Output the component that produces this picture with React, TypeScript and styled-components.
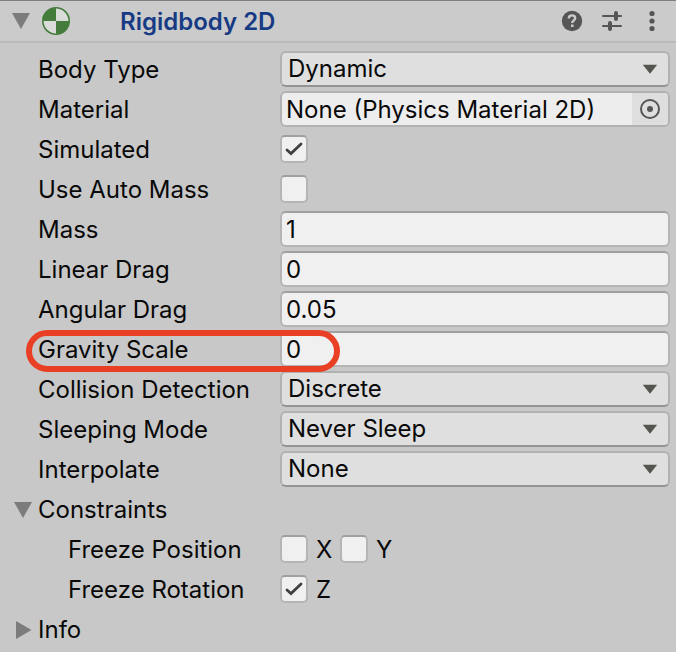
import React, { useId, useState } from "react";
import styled, { createGlobalStyle } from "styled-components";

const GlobalStyle = createGlobalStyle`
  *, *::before, *::after { box-sizing: border-box; }
  body {
    margin: 0;
    background: #c8c8c8;
    color: #090909;
    font-family: Inter, "Liberation Sans", sans-serif;
    font-size: 24px;
    line-height: 30px;
  }
  button, input, select { font: inherit; color: inherit; margin: 0; }
`;

const Inspector = styled.main`
  display: flex;
  flex-direction: column;
  min-height: 100vh;
  background: #c8c8c8;
`;

const Header = styled.header`
  display: flex;
  align-items: center;
  height: 43px;
  padding: 0 12px;
  background: #cbcbcb;
  border-top: 1px solid #7f7f7f;
  border-bottom: 2px solid #bababa;
`;

const IconButton = styled.button`
  display: flex;
  align-items: center;
  justify-content: center;
  padding: 0;
  border: 0;
  background: transparent;
  cursor: pointer;
  svg { display: block; }
`;

const HeaderActions = styled.div`
  display: flex;
  align-items: center;
  gap: 16px;
  margin-left: auto;
`;

const ComponentIcon = styled.svg`
  display: block;
  flex: none;
  margin-left: 12px;
`;

const Title = styled.h1`
  margin: 0 0 0 50px;
  padding-top: 2px;
  color: #173a84;
  font-size: 24px;
  font-weight: 600;
  line-height: 30px;
`;

const Properties = styled.div`
  display: flex;
  flex-direction: column;
  padding: 7px 6px 0 0;
`;

const Row = styled.div`
  position: relative;
  display: grid;
  grid-template-columns: 280px minmax(0, 1fr);
  align-items: center;
  height: 40px;
`;

const Label = styled.label<{ $nested?: boolean }>`
  padding-left: ${(p) => (p.$nested ? 68 : 38)}px;
  white-space: nowrap;
`;

const GroupLabel = styled(Label).attrs({ as: "span" })``;

const Control = styled.div`
  position: relative;
  display: flex;
  align-items: center;
  height: 38px;
  align-self: start;
`;

const TextInput = styled.input`
  width: 100%;
  height: 36px;
  padding: 1px 4px 0;
  background: #f0f0f0;
  border: 2px solid #b5b5b5;
  border-top-color: #a0a0a0;
  border-radius: 6px;
  outline-color: #3a72b0;
`;

const Dropdown = styled.select`
  width: 100%;
  height: 36px;
  padding: 0 40px 0 6px;
  appearance: none;
  background: #dfdfdf;
  border: 2px solid #b2b2b2;
  border-bottom-color: #939393;
  border-radius: 6px;
  outline-color: #3a72b0;
`;

const DropdownArrow = styled.svg`
  position: absolute;
  right: 12px;
  top: 14px;
  pointer-events: none;
`;

const ObjectField = styled.div`
  display: flex;
  width: 100%;
  height: 36px;
  overflow: hidden;
  background: #ededed;
  border: 2px solid #b2b2b2;
  border-radius: 6px;
`;

const ObjectInput = styled.input`
  flex: 1;
  min-width: 0;
  padding: 1px 4px 0;
  border: 0;
  background: transparent;
  outline: 0;
`;

const PickerButton = styled(IconButton)`
  width: 36px;
  background: #dedede;
`;

const CheckGroup = styled.div`
  display: grid;
  grid-auto-flow: column;
  grid-auto-columns: 60px;
`;

const CheckLabel = styled.label`
  display: flex;
  align-items: center;
  gap: 8px;
`;

const AxisName = styled.span`
  padding-top: 2px;
`;

const CheckFrame = styled.span`
  position: relative;
  display: block;
  flex: none;
  width: 28px;
  height: 28px;
`;

const CheckInput = styled.input`
  display: block;
  width: 28px;
  height: 28px;
  appearance: none;
  background: #f0f0f0;
  border: 2px solid #b5b5b5;
  border-top-color: #a0a0a0;
  border-radius: 5px;
  outline-color: #3a72b0;
`;

const CheckMark = styled.svg`
  position: absolute;
  inset: 0;
  pointer-events: none;
`;

const FoldoutButton = styled.button`
  display: flex;
  align-items: center;
  gap: 6px;
  height: 40px;
  padding: 0 0 0 14px;
  border: 0;
  background: transparent;
  text-align: left;
  cursor: pointer;
`;

const Highlight = styled.div`
  position: absolute;
  left: 26px;
  top: 0;
  width: 314px;
  height: 42px;
  border: 6px solid #e94025;
  border-radius: 21px;
  z-index: 1;
  pointer-events: none;
`;

function Triangle({ open }: { open: boolean }) {
  return (
    <svg width="18" height="18" viewBox="0 0 18 18" fill="#7c7c7c" aria-hidden="true">
      <path d={open ? "M0 1H18L9 17Z" : "M2 0L17.500 9L2 18Z"} />
    </svg>
  );
}

function Checkbox({ id, initial = false }: { id?: string; initial?: boolean }) {
  const [checked, setChecked] = useState(initial);
  return (
    <CheckFrame>
      <CheckInput
        id={id}
        type="checkbox"
        checked={checked}
        onChange={(e) => setChecked(e.target.checked)}
      />
      {checked && (
        <CheckMark width="28" height="28" viewBox="0 0 28 28" fill="none" stroke="#404040" strokeWidth="2.8" strokeLinecap="round" aria-hidden="true">
          <path d="M7 15L11 18.500L21 9" />
        </CheckMark>
      )}
    </CheckFrame>
  );
}

function SelectRow({ label, options }: { label: string; options: string[] }) {
  const id = useId();
  return (
    <Row>
      <Label htmlFor={id}>{label}</Label>
      <Control>
        <Dropdown id={id} defaultValue={options[0]}>
          {options.map((o) => (
            <option key={o}>{o}</option>
          ))}
        </Dropdown>
        <DropdownArrow width="16" height="10" viewBox="0 0 16 10" fill="#555550" aria-hidden="true">
          <path d="M0.800 0.800H15.200L8 9.800Z" />
        </DropdownArrow>
      </Control>
    </Row>
  );
}

function NumberRow({ label, value, highlighted }: { label: string; value: string; highlighted?: boolean }) {
  const id = useId();
  return (
    <Row>
      <Label htmlFor={id}>{label}</Label>
      <Control>
        <TextInput id={id} inputMode="decimal" defaultValue={value} />
      </Control>
      {highlighted && <Highlight />}
    </Row>
  );
}

function ToggleRow({ label, initial }: { label: string; initial?: boolean }) {
  const id = useId();
  return (
    <Row>
      <Label htmlFor={id}>{label}</Label>
      <Control>
        <Checkbox id={id} initial={initial} />
      </Control>
    </Row>
  );
}

function AxisRow({ label, axes }: { label: string; axes: { name: string; on?: boolean }[] }) {
  const id = useId();
  return (
    <Row role="group" aria-labelledby={id}>
      <GroupLabel id={id} $nested>{label}</GroupLabel>
      <Control>
        <CheckGroup>
          {axes.map((a) => (
            <CheckLabel key={a.name}>
              <Checkbox initial={a.on} />
              <AxisName>{a.name}</AxisName>
            </CheckLabel>
          ))}
        </CheckGroup>
      </Control>
    </Row>
  );
}

function MaterialRow() {
  const id = useId();
  return (
    <Row>
      <Label htmlFor={id}>Material</Label>
      <Control>
        <ObjectField>
          <ObjectInput id={id} readOnly value="None (Physics Material 2D)" />
          <PickerButton type="button" aria-label="Select material">
            <svg width="22" height="22" viewBox="0 0 22 22" aria-hidden="true">
              <circle cx="11" cy="11" r="9" fill="none" stroke="#555" strokeWidth="2" />
              <circle cx="11" cy="11" r="3" fill="#555" />
            </svg>
          </PickerButton>
        </ObjectField>
      </Control>
    </Row>
  );
}

export default function App() {
  const [expanded, setExpanded] = useState(true);
  const [constraints, setConstraints] = useState(true);
  const [info, setInfo] = useState(false);

  return (
    <>
      <GlobalStyle />
      <Inspector>
        <Header>
          <IconButton type="button" aria-label="Toggle component" aria-expanded={expanded} onClick={() => setExpanded(!expanded)}>
            <Triangle open={expanded} />
          </IconButton>
          <ComponentIcon width="28" height="28" viewBox="0 0 28 28" aria-hidden="true">
            <circle cx="14" cy="14" r="13" fill="#d9dcd8" />
            <path d="M14 14V1A13 13 0 0 0 1 14ZM14 14V27A13 13 0 0 0 27 14Z" fill="#437c3b" />
            <circle cx="14" cy="14" r="13.200" fill="none" stroke="#437c3b" strokeWidth="1.6" />
          </ComponentIcon>
          <Title>Rigidbody 2D</Title>
          <HeaderActions>
            <IconButton type="button" aria-label="Help">
              <svg width="24" height="24" viewBox="0 0 24 24" aria-hidden="true">
                <circle cx="12" cy="12" r="10.200" fill="#555" />
                <path d="M8.800 9.600C8.800 7.500 10.100 6.400 12 6.400S15.200 7.500 15.200 9.200C15.200 11.400 12.200 11.400 12.200 14" fill="none" stroke="#cbcbcb" strokeWidth="2.400" />
                <rect x="11" y="15.500" width="2.500" height="2.500" fill="#cbcbcb" />
              </svg>
            </IconButton>
            <IconButton type="button" aria-label="Presets">
              <svg width="24" height="24" viewBox="0 0 24 24" fill="none" stroke="#555" strokeLinecap="round" aria-hidden="true">
                <path d="M3 7H14.500M18 7H21M3 17H8M12 17H21" strokeWidth="2" />
                <path d="M16 4V10M10 14V20" strokeWidth="4" />
              </svg>
            </IconButton>
            <IconButton type="button" aria-label="More options">
              <svg width="24" height="24" viewBox="0 0 24 24" fill="#555" aria-hidden="true">
                <circle cx="12" cy="4.500" r="2.600" />
                <circle cx="12" cy="12" r="2.600" />
                <circle cx="12" cy="19.500" r="2.600" />
              </svg>
            </IconButton>
          </HeaderActions>
        </Header>
        {expanded && (
          <Properties>
            <SelectRow label="Body Type" options={["Dynamic", "Kinematic", "Static"]} />
            <MaterialRow />
            <ToggleRow label="Simulated" initial />
            <ToggleRow label="Use Auto Mass" />
            <NumberRow label="Mass" value="1" />
            <NumberRow label="Linear Drag" value="0" />
            <NumberRow label="Angular Drag" value="0.05" />
            <NumberRow label="Gravity Scale" value="0" highlighted />
            <SelectRow label="Collision Detection" options={["Discrete", "Continuous"]} />
            <SelectRow label="Sleeping Mode" options={["Never Sleep", "Start Awake", "Start Asleep"]} />
            <SelectRow label="Interpolate" options={["None", "Interpolate", "Extrapolate"]} />
            <FoldoutButton type="button" aria-expanded={constraints} onClick={() => setConstraints(!constraints)}>
              <Triangle open={constraints} />
              Constraints
            </FoldoutButton>
            {constraints && (
              <>
                <AxisRow label="Freeze Position" axes={[{ name: "X" }, { name: "Y" }]} />
                <AxisRow label="Freeze Rotation" axes={[{ name: "Z", on: true }]} />
              </>
            )}
            <FoldoutButton type="button" aria-expanded={info} onClick={() => setInfo(!info)}>
              <Triangle open={info} />
              Info
            </FoldoutButton>
          </Properties>
        )}
      </Inspector>
    </>
  );
}
